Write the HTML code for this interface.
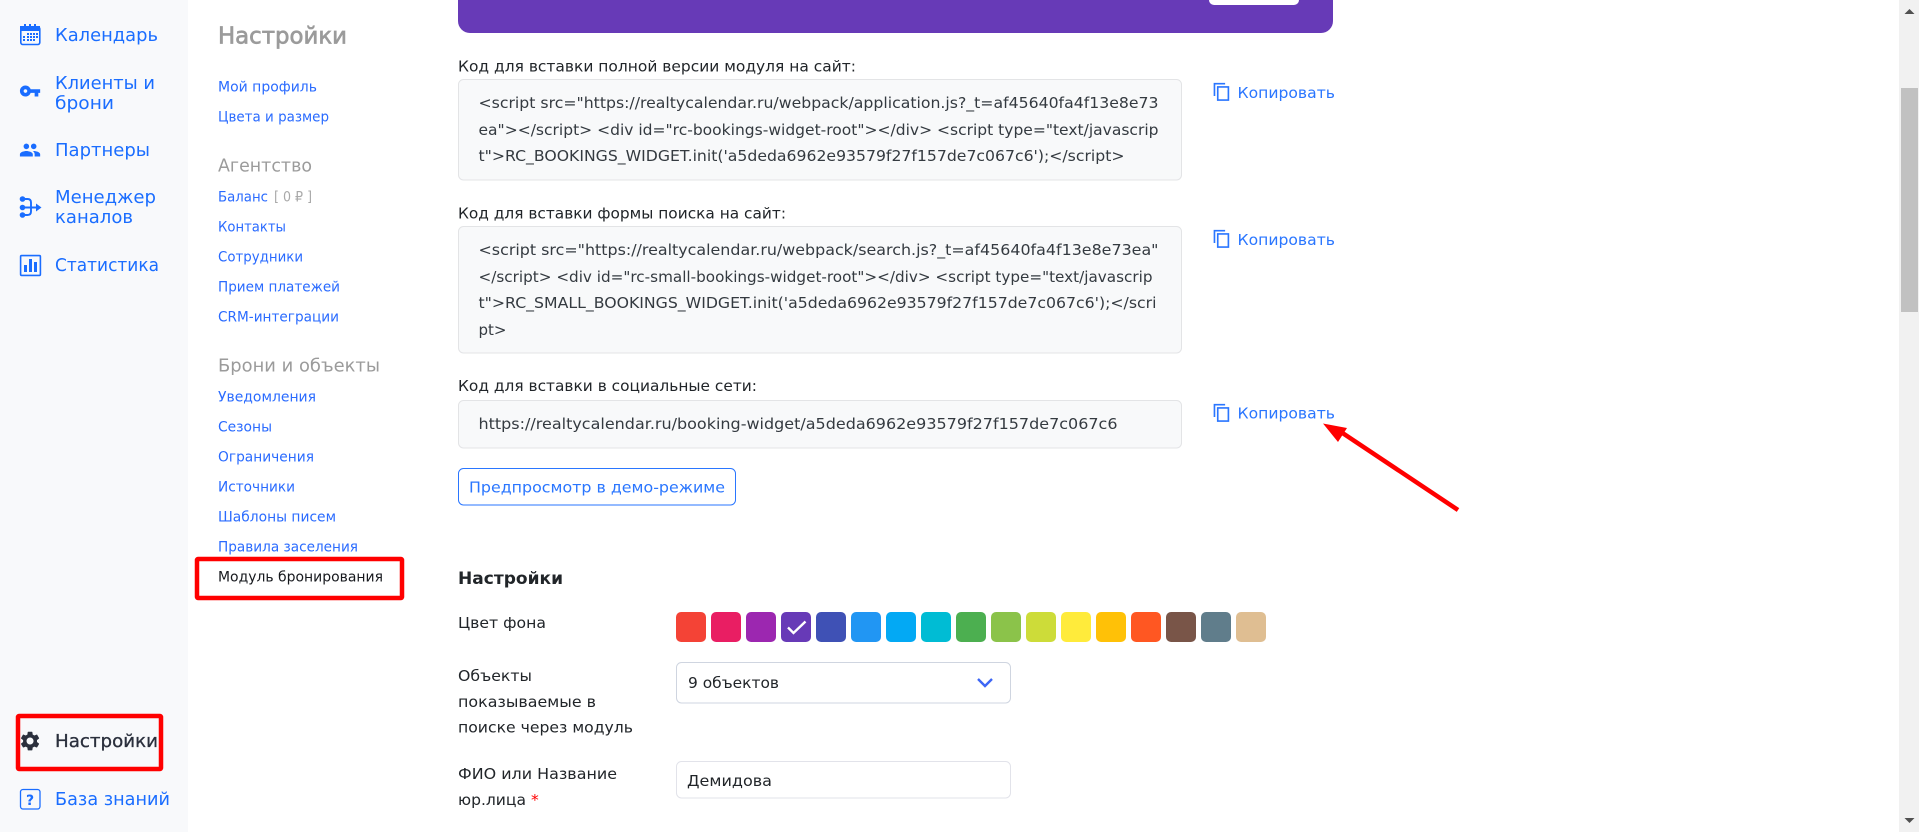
<!DOCTYPE html>
<html lang="ru">
<head>
<meta charset="utf-8">
<title>Модуль бронирования</title>
<style>
html,body{margin:0;padding:0;background:#fff;overflow:hidden;width:1919px;height:832px}
svg{display:block;position:absolute;left:0;top:0}
text{font-family:"DejaVu Sans","Liberation Sans",sans-serif;white-space:pre}
.nav{font-size:17.5px;fill:#1a6dff}
.lnk{font-size:14.5px;fill:#2a6bff}
.h{font-size:18px;fill:#9b9b9b}
.lbl{font-size:15.5px;fill:#212529}
.code{font-size:15.5px;fill:#343a40}
.cp{font-size:15.5px;fill:#2a76ff}
</style>
</head>
<body>
<svg width="1919" height="832" viewBox="0 0 1919 832" xmlns="http://www.w3.org/2000/svg">
<rect width="1919" height="832" fill="#fff"/>
<rect width="188" height="832" fill="#f8f9fb"/>

<!-- sidebar icons -->
<g fill="none" stroke="#1a6dff" stroke-width="1.6">
<rect x="20.8" y="27" width="19" height="17.5" rx="2"/>
</g>
<rect x="20" y="26" width="20" height="5" fill="#1a6dff"/>
<g fill="#1a6dff">
<rect x="24" y="24" width="2" height="4"/><rect x="29" y="24" width="2" height="4"/><rect x="34" y="24" width="2" height="4"/>
<rect x="27" y="33" width="2" height="2"/><rect x="30" y="33" width="2" height="2"/><rect x="33" y="33" width="2" height="2"/><rect x="36" y="33" width="2" height="2"/>
<rect x="23" y="36" width="2" height="2"/><rect x="27" y="36" width="2" height="2"/><rect x="30" y="36" width="2" height="2"/><rect x="33" y="36" width="2" height="2"/><rect x="36" y="36" width="2" height="2"/>
<rect x="23" y="39" width="2" height="2"/><rect x="27" y="39" width="2" height="2"/><rect x="30" y="39" width="2" height="2"/><rect x="33" y="39" width="2" height="2"/>
</g>
<path transform="translate(19 80) scale(.92)" fill="#1a6dff" d="M12.65 10C11.83 7.67 9.61 6 7 6c-3.31 0-6 2.69-6 6s2.69 6 6 6c2.61 0 4.83-1.67 5.65-4H17v4h4v-4h2v-4H12.65zM7 14c-1.1 0-2-.9-2-2s.9-2 2-2 2 .9 2 2-.9 2-2 2z"/>
<path transform="translate(19 139) scale(.92)" fill="#1a6dff" d="M16 11c1.66 0 2.99-1.34 2.99-3S17.66 5 16 5c-1.66 0-3 1.34-3 3s1.34 3 3 3zm-8 0c1.66 0 2.99-1.34 2.99-3S9.66 5 8 5C6.34 5 5 6.34 5 8s1.34 3 3 3zm0 2c-2.33 0-7 1.17-7 3.5V19h14v-2.5c0-2.33-4.67-3.5-7-3.5zm8 0c-.29 0-.62.02-.97.05 1.16.84 1.97 1.97 1.97 3.45V19h6v-2.5c0-2.33-4.67-3.5-7-3.5z"/>
<g fill="#1a6dff">
<circle cx="22.5" cy="199" r="2.8"/><circle cx="22.5" cy="207.5" r="2.8"/><circle cx="22.5" cy="215" r="2.8"/>
<path d="M36 203.500l5.500 4-5.500 4z"/>
</g>
<path d="M22 199h5.500q3.500 0 3.500 3.500v5M22 207.500h16M22 215h5.500q3.500 0 3.500-3.500v-4" fill="none" stroke="#1a6dff" stroke-width="1.900"/>
<rect x="20.600" y="255.600" width="19.800" height="19.800" rx="1" fill="none" stroke="#1a6dff" stroke-width="1.600"/>
<g fill="#1a6dff"><rect x="24" y="265" width="3" height="7"/><rect x="29" y="259" width="3" height="13"/><rect x="34" y="262" width="3" height="10"/></g>

<path transform="translate(18.400 729.400) scale(.97)" fill="#2a2f3c" d="M19.14 12.94c.04-.3.06-.61.06-.94 0-.32-.02-.64-.07-.94l2.03-1.58c.18-.14.23-.41.12-.61l-1.92-3.32c-.12-.22-.37-.29-.59-.22l-2.39.96c-.5-.38-1.03-.7-1.62-.94l-.36-2.54c-.04-.24-.24-.41-.48-.41h-3.84c-.24 0-.43.17-.47.41l-.36 2.54c-.59.24-1.13.57-1.62.94l-2.39-.96c-.22-.08-.47 0-.59.22L2.74 8.87c-.12.21-.08.47.12.61l2.03 1.58c-.05.3-.09.63-.09.94s.02.64.07.94l-2.03 1.58c-.18.14-.23.41-.12.61l1.92 3.32c.12.22.37.29.59.22l2.39-.96c.5.38 1.03.7 1.62.94l.36 2.54c.05.24.24.41.48.41h3.84c.24 0 .44-.17.47-.41l.36-2.54c.59-.24 1.13-.56 1.62-.94l2.39.96c.22.08.47 0 .59-.22l1.92-3.32c.12-.22.07-.47-.12-.61l-2.01-1.58zM12 15.6c-1.98 0-3.6-1.62-3.6-3.6s1.62-3.6 3.6-3.6 3.6 1.62 3.6 3.6-1.62 3.6-3.6 3.6z"/>
<rect x="20.500" y="789.500" width="19.500" height="19.500" rx="2.500" fill="none" stroke="#1a6dff" stroke-width="1.300"/>
<text x="30" y="805" font-size="14" font-weight="700" text-anchor="middle" fill="#1a6dff">?</text>

<!-- sidebar text -->
<text class="nav" x="55" y="41" textLength="103" lengthAdjust="spacingAndGlyphs">Календарь</text>
<text class="nav" x="55" y="89" textLength="100" lengthAdjust="spacingAndGlyphs">Клиенты и</text>
<text class="nav" x="55" y="109" textLength="59" lengthAdjust="spacingAndGlyphs">брони</text>
<text class="nav" x="55" y="156" textLength="95" lengthAdjust="spacingAndGlyphs">Партнеры</text>
<text class="nav" x="55" y="203" textLength="101" lengthAdjust="spacingAndGlyphs">Менеджер</text>
<text class="nav" x="55" y="223" textLength="78" lengthAdjust="spacingAndGlyphs">каналов</text>
<text class="nav" x="55" y="271" textLength="104" lengthAdjust="spacingAndGlyphs">Статистика</text>
<text class="nav" x="55" y="747" textLength="103" lengthAdjust="spacingAndGlyphs" style="fill:#2a2f3c;stroke:#2a2f3c;stroke-width:.3px">Настройки</text>
<text class="nav" x="55" y="805" textLength="115" lengthAdjust="spacingAndGlyphs">База знаний</text>

<!-- settings column -->
<text x="218" y="43.5" font-size="23" fill="#9b9b9b" stroke="#9b9b9b" stroke-width=".7" textLength="129" lengthAdjust="spacingAndGlyphs">Настройки</text>
<text class="lnk" x="218" y="91.5" textLength="99" lengthAdjust="spacingAndGlyphs">Мой профиль</text>
<text class="lnk" x="218" y="121.5" textLength="111" lengthAdjust="spacingAndGlyphs">Цвета и размер</text>
<text class="h" x="218" y="171.500" textLength="94" lengthAdjust="spacingAndGlyphs">Агентство</text>
<text class="lnk" x="218" y="201.5" textLength="50" lengthAdjust="spacingAndGlyphs">Баланс</text>
<text class="lnk" x="274" y="201.5" textLength="38" lengthAdjust="spacingAndGlyphs" style="fill:#a9a9a9">[ 0 ₽ ]</text>
<text class="lnk" x="218" y="231.5" textLength="68" lengthAdjust="spacingAndGlyphs">Контакты</text>
<text class="lnk" x="218" y="261.5" textLength="85" lengthAdjust="spacingAndGlyphs">Сотрудники</text>
<text class="lnk" x="218" y="291.5" textLength="122" lengthAdjust="spacingAndGlyphs">Прием платежей</text>
<text class="lnk" x="218" y="321.5" textLength="121" lengthAdjust="spacingAndGlyphs">CRM-интеграции</text>
<text class="h" x="218" y="371.500" textLength="162" lengthAdjust="spacingAndGlyphs">Брони и объекты</text>
<text class="lnk" x="218" y="401.5" textLength="98" lengthAdjust="spacingAndGlyphs">Уведомления</text>
<text class="lnk" x="218" y="431.5" textLength="54" lengthAdjust="spacingAndGlyphs">Сезоны</text>
<text class="lnk" x="218" y="461.5" textLength="96" lengthAdjust="spacingAndGlyphs">Ограничения</text>
<text class="lnk" x="218" y="491.5" textLength="77" lengthAdjust="spacingAndGlyphs">Источники</text>
<text class="lnk" x="218" y="521.5" textLength="118" lengthAdjust="spacingAndGlyphs">Шаблоны писем</text>
<text class="lnk" x="218" y="551.5" textLength="140" lengthAdjust="spacingAndGlyphs">Правила заселения</text>
<text class="lnk" x="218" y="581.5" textLength="165" lengthAdjust="spacingAndGlyphs" style="fill:#16181d">Модуль бронирования</text>

<!-- purple preview -->
<path d="M458-5h875v26a12 12 0 0 1-12 12H470a12 12 0 0 1-12-12z" fill="#673ab7"/>
<path d="M1209-5h90v5a5 5 0 0 1-5 5h-80a5 5 0 0 1-5-5z" fill="#fff"/>

<!-- code blocks -->
<text class="lbl" x="458" y="71.5" textLength="398" lengthAdjust="spacingAndGlyphs">Код для вставки полной версии модуля на сайт:</text>
<rect x="458.500" y="79.500" width="723" height="100.500" rx="5" fill="#f8f9fa" stroke="#e3e4e6"/>
<text class="code" x="478.500" y="108" textLength="680" lengthAdjust="spacingAndGlyphs">&lt;script src="https://realtycalendar.ru/webpack/application.js?_t=af45640fa4f13e8e73</text>
<text class="code" x="478.500" y="135" textLength="680" lengthAdjust="spacingAndGlyphs">ea"&gt;&lt;/script&gt; &lt;div id="rc-bookings-widget-root"&gt;&lt;/div&gt; &lt;script type="text/javascrip</text>
<text class="code" x="478.500" y="161" textLength="646" lengthAdjust="spacingAndGlyphs">t"&gt;RC_BOOKINGS_WIDGET.init('a5deda6962e93579f27f157de7c067c6');&lt;/script&gt;</text>

<text class="lbl" x="458" y="218.500" textLength="328" lengthAdjust="spacingAndGlyphs">Код для вставки формы поиска на сайт:</text>
<rect x="458.500" y="226.500" width="723" height="126.500" rx="5" fill="#f8f9fa" stroke="#e3e4e6"/>
<text class="code" x="478.500" y="255" textLength="680" lengthAdjust="spacingAndGlyphs">&lt;script src="https://realtycalendar.ru/webpack/search.js?_t=af45640fa4f13e8e73ea"</text>
<text class="code" x="478.500" y="282" textLength="674" lengthAdjust="spacingAndGlyphs">&lt;/script&gt; &lt;div id="rc-small-bookings-widget-root"&gt;&lt;/div&gt; &lt;script type="text/javascrip</text>
<text class="code" x="478.500" y="308" textLength="678" lengthAdjust="spacingAndGlyphs">t"&gt;RC_SMALL_BOOKINGS_WIDGET.init('a5deda6962e93579f27f157de7c067c6');&lt;/scri</text>
<text class="code" x="478.500" y="335" textLength="28" lengthAdjust="spacingAndGlyphs">pt&gt;</text>

<text class="lbl" x="458" y="391" textLength="299" lengthAdjust="spacingAndGlyphs">Код для вставки в социальные сети:</text>
<rect x="458.500" y="400.500" width="723" height="47.500" rx="5" fill="#f8f9fa" stroke="#e3e4e6"/>
<text class="code" x="478.500" y="429" textLength="639" lengthAdjust="spacingAndGlyphs">https://realtycalendar.ru/booking-widget/a5deda6962e93579f27f157de7c067c6</text>

<!-- copy buttons -->
<defs>
<path id="cpi" fill="#2a76ff" d="M16 1H2v16h2V3h12V1zm5 4H6v18h15V5zm-2 16H8V7h11v14z"/>
</defs>
<use href="#cpi" transform="translate(1212 82) scale(.82)"/>
<text class="cp" x="1237.500" y="98" textLength="97.500" lengthAdjust="spacingAndGlyphs">Копировать</text>
<use href="#cpi" transform="translate(1212 229) scale(.82)"/>
<text class="cp" x="1237.500" y="245" textLength="97.500" lengthAdjust="spacingAndGlyphs">Копировать</text>
<use href="#cpi" transform="translate(1212 403) scale(.82)"/>
<text class="cp" x="1237.500" y="418.500" textLength="97.500" lengthAdjust="spacingAndGlyphs">Копировать</text>

<!-- arrow -->
<path d="M1458 510L1338 430" stroke="#f00" stroke-width="4.500" fill="none"/>
<path d="M1323 423.500L1347 428L1338 442z" fill="#f00"/>

<!-- demo button -->
<rect x="458.500" y="468.500" width="277" height="36.500" rx="5" fill="#fff" stroke="#2a76ff"/>
<text class="cp" x="469" y="492.500" textLength="256" lengthAdjust="spacingAndGlyphs">Предпросмотр в демо-режиме</text>

<!-- settings form -->
<text x="458" y="584" font-size="17" font-weight="700" fill="#212529" textLength="105" lengthAdjust="spacingAndGlyphs">Настройки</text>
<text class="lbl" x="458" y="628" textLength="88" lengthAdjust="spacingAndGlyphs">Цвет фона</text>
<g>
<rect x="676" y="612" width="30" height="30" rx="5" fill="#f44336"/>
<rect x="711" y="612" width="30" height="30" rx="5" fill="#e91e63"/>
<rect x="746" y="612" width="30" height="30" rx="5" fill="#9c27b0"/>
<rect x="781" y="612" width="30" height="30" rx="5" fill="#673ab7"/>
<rect x="816" y="612" width="30" height="30" rx="5" fill="#3f51b5"/>
<rect x="851" y="612" width="30" height="30" rx="5" fill="#2196f3"/>
<rect x="886" y="612" width="30" height="30" rx="5" fill="#03a9f4"/>
<rect x="921" y="612" width="30" height="30" rx="5" fill="#00bcd4"/>
<rect x="956" y="612" width="30" height="30" rx="5" fill="#4caf50"/>
<rect x="991" y="612" width="30" height="30" rx="5" fill="#8bc34a"/>
<rect x="1026" y="612" width="30" height="30" rx="5" fill="#cddc39"/>
<rect x="1061" y="612" width="30" height="30" rx="5" fill="#ffeb3b"/>
<rect x="1096" y="612" width="30" height="30" rx="5" fill="#ffc107"/>
<rect x="1131" y="612" width="30" height="30" rx="5" fill="#ff5722"/>
<rect x="1166" y="612" width="30" height="30" rx="5" fill="#795548"/>
<rect x="1201" y="612" width="30" height="30" rx="5" fill="#607d8b"/>
<rect x="1236" y="612" width="30" height="30" rx="5" fill="#dfbe92"/>
</g>
<path d="M788 627.500l5.500 5.500 12-11.500" fill="none" stroke="#fff" stroke-width="2.400"/>

<text class="lbl" x="458" y="681" textLength="74" lengthAdjust="spacingAndGlyphs">Объекты</text>
<text class="lbl" x="458" y="707" textLength="138" lengthAdjust="spacingAndGlyphs">показываемые в</text>
<text class="lbl" x="458" y="732.500" textLength="175" lengthAdjust="spacingAndGlyphs">поиске через модуль</text>
<rect x="676.500" y="662.500" width="334" height="40.500" rx="5" fill="#fff" stroke="#cfd5e0"/>
<text class="lbl" x="688" y="688" textLength="91" lengthAdjust="spacingAndGlyphs">9 объектов</text>
<path d="M978 679l7 7 7-7" fill="none" stroke="#3d66f5" stroke-width="2.400"/>

<text class="lbl" x="458" y="779" textLength="159" lengthAdjust="spacingAndGlyphs">ФИО или Название</text>
<text class="lbl" x="458" y="805" textLength="68" lengthAdjust="spacingAndGlyphs">юр.лица</text>
<text class="lbl" x="531" y="805" style="fill:#f00">*</text>
<rect x="676.500" y="761.500" width="334" height="36.500" rx="5" fill="#fff" stroke="#e2e3ea"/>
<text class="lbl" x="687" y="786" textLength="85" lengthAdjust="spacingAndGlyphs">Демидова</text>

<!-- annotation boxes -->
<rect x="18" y="716" width="143" height="53" rx="1" fill="none" stroke="#f00" stroke-width="4.500"/>
<rect x="197" y="559" width="205" height="39" rx="1" fill="none" stroke="#f00" stroke-width="4.500"/>

<!-- scrollbar -->
<rect x="1899" y="0" width="20" height="832" fill="#f1f1f1"/>
<rect x="1901" y="88" width="17" height="224" fill="#c1c1c1"/>
<path d="M1909.500 9l5 5h-10z" fill="#505050"/>
<path d="M1909.500 823l5-5h-10z" fill="#505050"/>
</svg>
</body>
</html>
